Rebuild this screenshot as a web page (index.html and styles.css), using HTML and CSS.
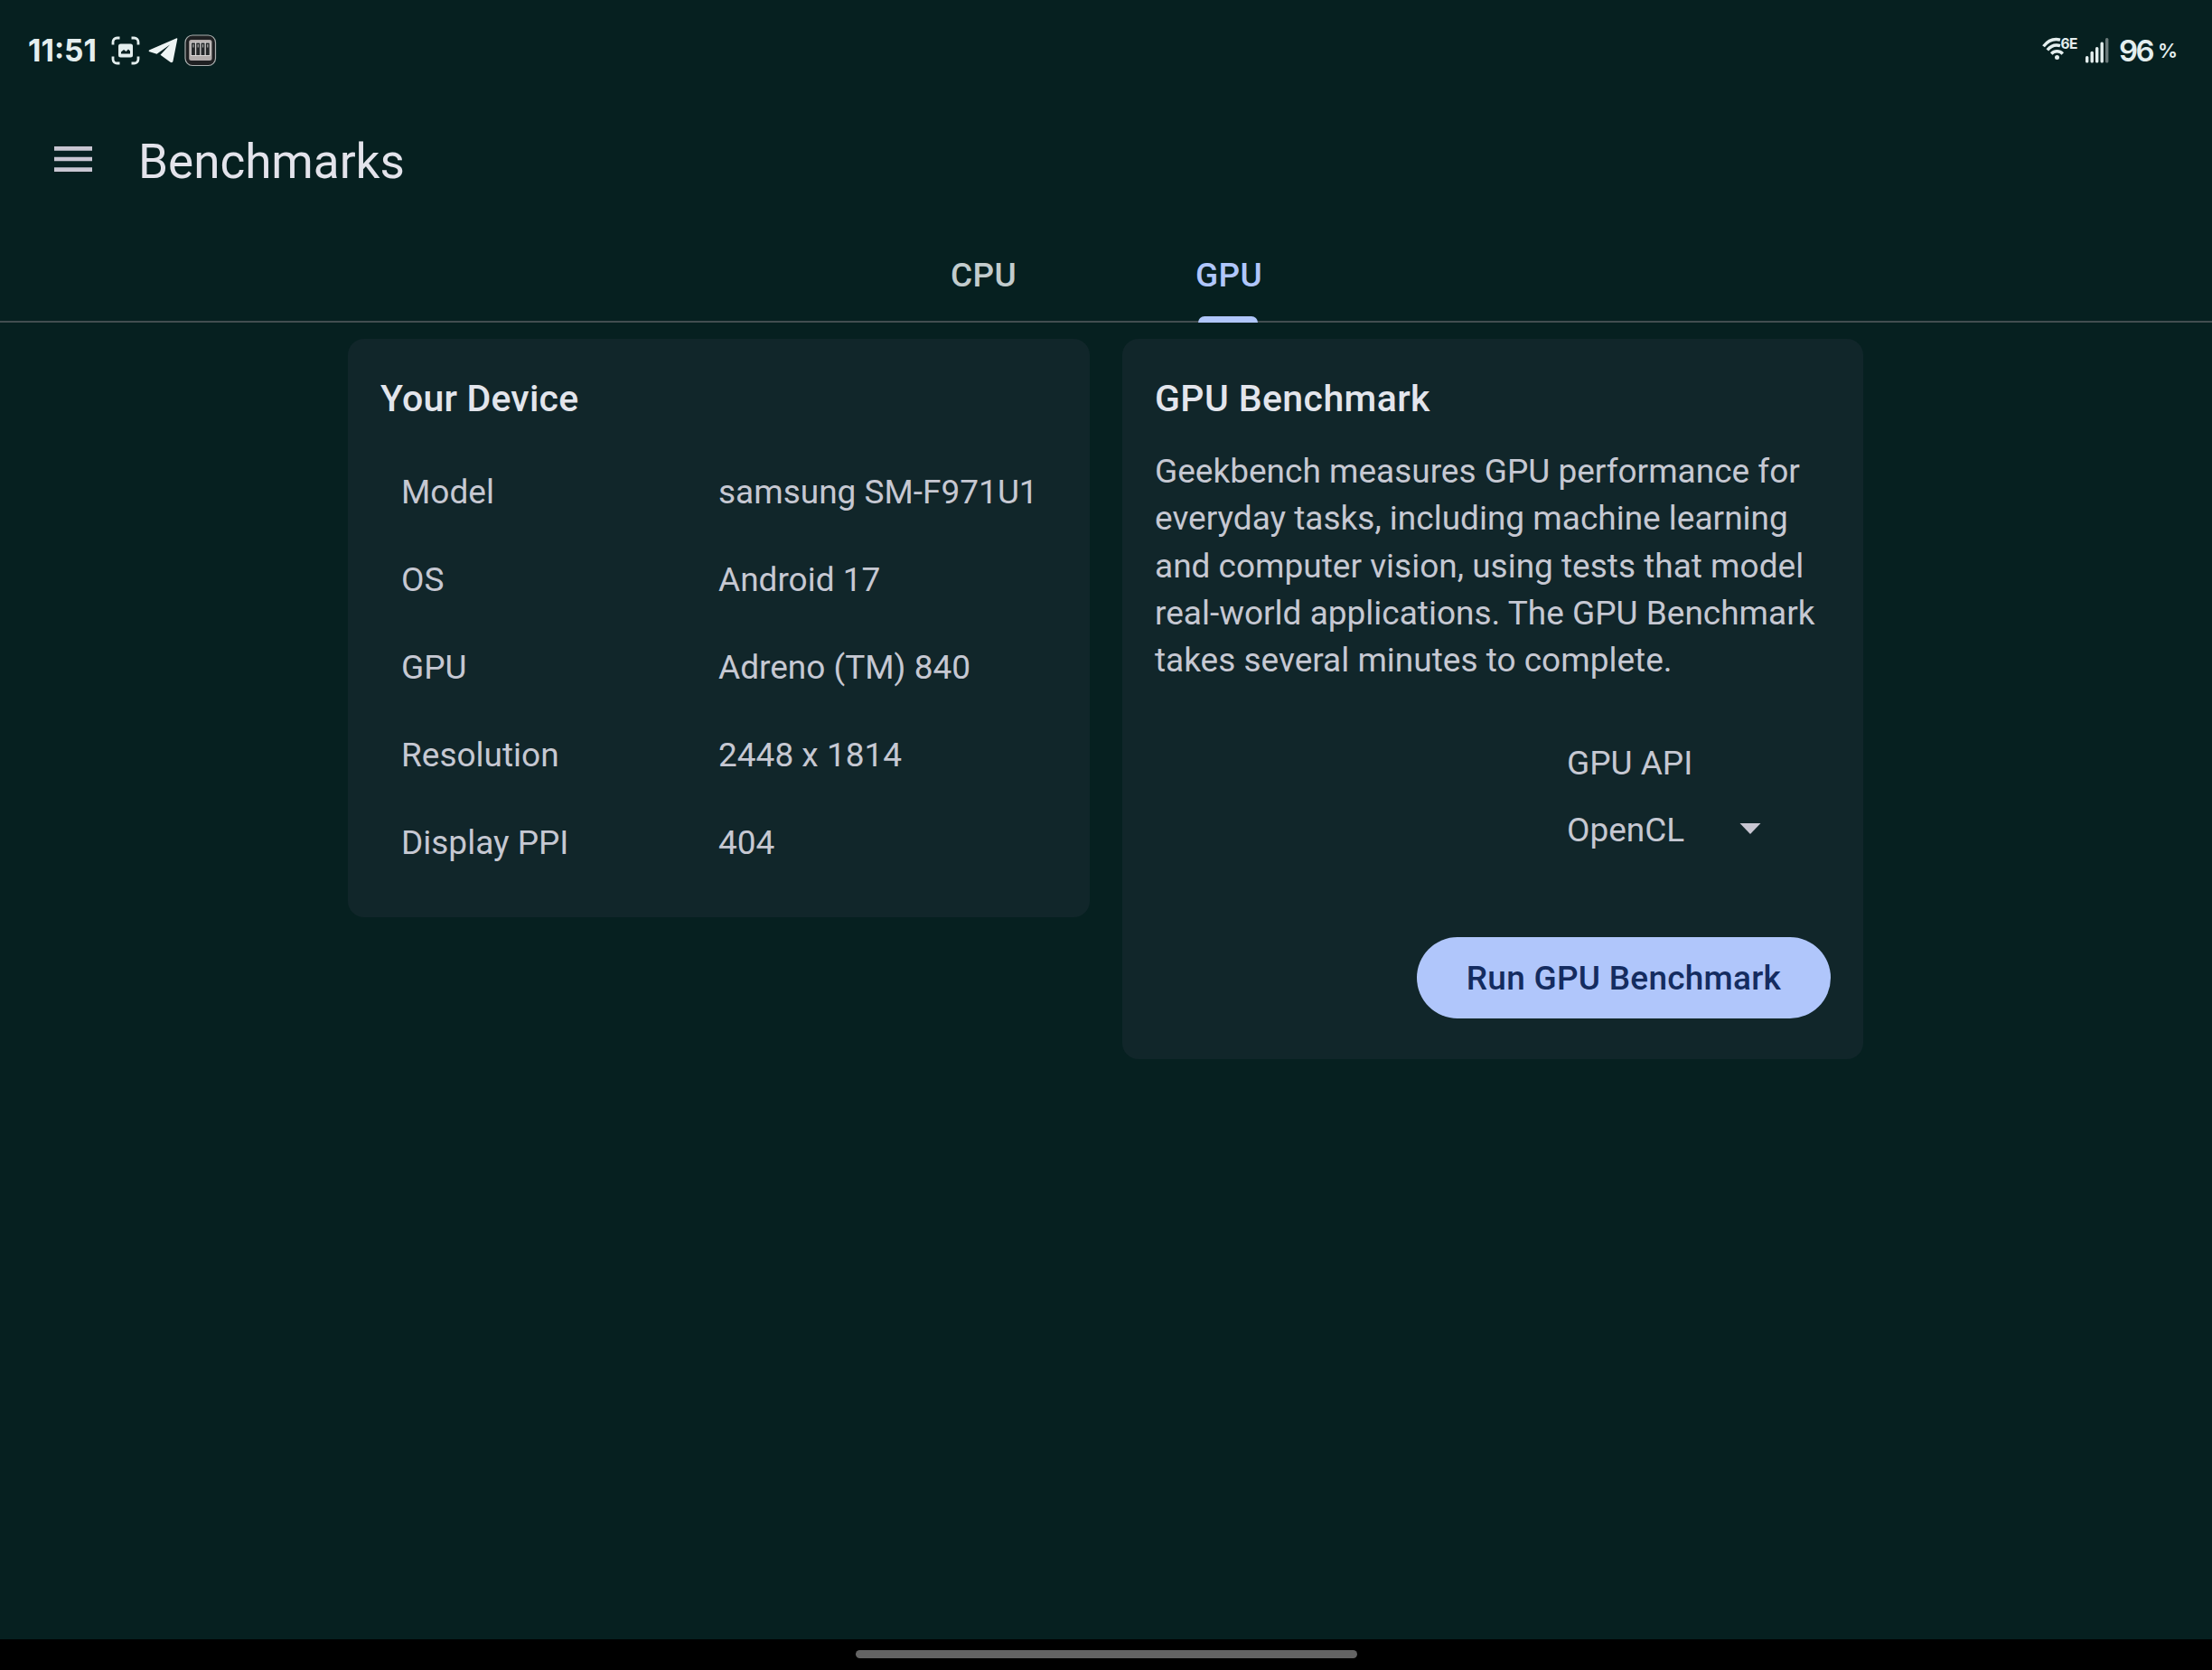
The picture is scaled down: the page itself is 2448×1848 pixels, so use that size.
FILE: index.html
```html
<!DOCTYPE html>
<html lang="en">
    <head>
        <meta charset="UTF-8">
        <meta name="viewport" content="width=device-width, initial-scale=1.0">
        <title>Benchmarks</title>
        <link rel="stylesheet" href="styles.css">
    </head>
    <body>
        <div class="status-bar">
            <div class="status-left">
                <span class="clock">11:51</span>
                <svg class="icon-capture" width="32" height="32" viewBox="0 0 32 32">
                    <path d="M2 9.500V6.500A4.500 4.500 0 0 1 6.500 2H9.500M22.500 2H25.500A4.500 4.500 0 0 1 30 6.500V9.500M30 22.500V25.500A4.500 4.500 0 0 1 25.500 30H22.500M9.500 30H6.500A4.500 4.500 0 0 1 2 25.500V22.500" fill="none" stroke="#e4eeee" stroke-width="2.800"/>
                    <rect x="8" y="8.500" width="16" height="15" rx="2.500" fill="#e4eeee"/>
                    <path d="M11 19.500V17.500L14 15L16.500 17L19 14.500L21 16.500V19.500Z" fill="#0b2122"/>
                </svg>
                <svg class="icon-telegram" width="33" height="30" viewBox="0 0 33 30">
                    <path d="M31.500 1.200L1.500 14.200C0.300 14.800 0.400 15.900 1.600 16.300L9.500 18.700L24 8.500L13.500 19.800L24.500 27.700C25.900 28.600 27.200 28.200 27.500 26.500L32.300 2.200C32.400 1.400 32.100 1 31.500 1.200Z" fill="#eef4f4"/>
                </svg>
                <svg class="icon-app" width="36" height="36" viewBox="0 0 36 36">
                    <rect x="1" y="1" width="33.500" height="33.500" rx="8" fill="#1f2022" stroke="#a9aeae" stroke-width="1.200"/>
                    <rect x="5.200" y="6" width="25.300" height="23" rx="2.500" fill="#b3adac"/>
                    <rect x="7" y="8.500" width="21.700" height="15.500" fill="#d9d6d6"/>
                    <path d="M9.900 9.500V23M15.200 9.500V23M20.500 9.500V23M25.800 9.500V23" stroke="#25282a" stroke-width="4"/>
                    <path d="M9.900 11V14.500M15.200 11V14.500M20.500 11V14.500M25.800 11V14.500" stroke="#a9a9a9" stroke-width="1.200"/>
                </svg>
            </div>
            <div class="status-right">
                <svg class="icon-wifi" width="42" height="28" viewBox="0 0 42 28">
                    <g fill="none" stroke="#e4eeee" stroke-width="3.400">
                        <path d="M1.500 9.300C6.500 3 13.500 0.500 20 2.200"/>
                        <path d="M5.800 13.300C9.700 8.800 15.300 7.200 20 8.700"/>
                        <path d="M10.200 17.500C13.700 13.900 19.300 13.900 22.800 17.500"/>
                    </g>
                    <circle cx="16.500" cy="21.600" r="2.500" fill="#e4eeee"/>
                    <text x="20.500" y="12.300" class="wifi-label">6E</text>
                </svg>
                <svg class="icon-signal" width="26" height="28" viewBox="0 0 26 28">
                    <g fill="#e4eeee">
                        <rect x="0" y="20" width="3.400" height="7.500" rx="1.500"/>
                        <rect x="5.500" y="14.800" width="3.400" height="12.700" rx="1.500"/>
                        <rect x="11" y="10" width="3.400" height="17.500" rx="1.500"/>
                        <rect x="16.500" y="4.500" width="3.400" height="23" rx="1.500"/>
                    </g>
                    <rect x="22" y="0" width="3.400" height="27.500" rx="1.500" fill="#6b7a7b"/>
                </svg>
                <span class="battery">96</span>
                <span class="percent">%</span>
            </div>
        </div>

        <header class="app-bar">
            <svg class="menu-icon" width="42" height="28" viewBox="0 0 18 12">
                <path d="M0 12h18v-2H0v2zm0-5h18V5H0v2zm0-7v2h18V0H0z" fill="#c8c6d2"/>
            </svg>
            <h1>Benchmarks</h1>
        </header>

        <nav class="tabs">
            <div class="tab">CPU</div>
            <div class="tab active">GPU</div>
        </nav>

        <main class="cards">
            <section class="card device-card">
                <h2>Your Device</h2>
                <dl class="device-info">
                    <div class="row"><dt>Model</dt><dd>samsung SM-F971U1</dd></div>
                    <div class="row"><dt>OS</dt><dd>Android 17</dd></div>
                    <div class="row"><dt>GPU</dt><dd>Adreno (TM) 840</dd></div>
                    <div class="row"><dt>Resolution</dt><dd>2448 x 1814</dd></div>
                    <div class="row"><dt>Display PPI</dt><dd>404</dd></div>
                </dl>
            </section>
            <section class="card benchmark-card">
                <h2>GPU Benchmark</h2>
                <p>Geekbench measures GPU performance for everyday tasks, including machine learning and computer vision, using tests that model real-world applications. The GPU Benchmark takes several minutes to complete.</p>
                <div class="api">
                    <div class="api-label">GPU API</div>
                    <div class="api-select">
                        <span>OpenCL</span>
                        <svg width="24" height="12" viewBox="0 0 24 12">
                            <path d="M0.500 0H23.500L12 12Z" fill="#c8c6d2"/>
                        </svg>
                    </div>
                </div>
                <button class="run-button">Run GPU Benchmark</button>
            </section>
        </main>

        <footer class="nav-bar">
            <div class="gesture-handle"></div>
        </footer>
    </body>
</html>
```
FILE: styles.css
```css
* {
    box-sizing: border-box;
}
body {
    margin: 0;
    height: 1848px;
    display: flex;
    flex-direction: column;
    background-color: #062020;
    color: #c6c8d2;
    font-family: Roboto, sans-serif;
    font-size: 37px;
    overflow: hidden;
}
h1, h2, p, dl, dd {
    margin: 0;
}

/* status bar */
.status-bar {
    height: 100px;
    padding: 12px 40px 0 31px;
    display: flex;
    justify-content: space-between;
    align-items: center;
    color: #e4eeee;
    font-family: Inter, sans-serif;
}
.status-left, .status-right {
    display: flex;
    align-items: center;
}
.clock {
    width: 92px;
    font-size: 33.5px;
    font-weight: 700;
}
.icon-telegram {
    margin-left: 9px;
}
.icon-app {
    margin-left: 7px;
}
.icon-wifi {
    overflow: visible;
}
.wifi-label {
    font-size: 15.5px;
    font-weight: 700;
    letter-spacing: -0.5px;
    fill: #e4eeee;
}
.icon-signal {
    margin-left: 6px;
}
.battery {
    width: 41px;
    margin-left: 11px;
    font-size: 33px;
    font-weight: 600;
    letter-spacing: -2.5px;
}
.percent {
    width: 20px;
    margin-left: 2px;
    font-size: 22px;
    font-weight: 600;
}

/* app bar */
.app-bar {
    height: 152px;
    padding-left: 60px;
    display: flex;
    align-items: center;
}
h1 {
    margin-left: 51px;
    padding-top: 6px;
    color: #e3e3eb;
    font-size: 53px;
    font-weight: 400;
}

/* tabs */
.tabs {
    height: 105px;
    display: flex;
    justify-content: center;
    box-shadow: inset 0 -2px #424e50;
}
.tab {
    width: 271px;
    height: 105px;
    line-height: 105px;
    text-align: center;
    font-weight: 500;
    letter-spacing: 0.4px;
    color: #c2cccd;
}
.tab.active {
    position: relative;
    padding-left: 1px;
    color: #b0c6fb;
}
.tab.active::after {
    content: "";
    position: absolute;
    left: 102px;
    bottom: 0;
    width: 66px;
    height: 7px;
    border-radius: 7px 7px 0 0;
    background-color: #b0c6fb;
}

/* cards */
.cards {
    flex: 1;
    padding: 18px 0 0 385px;
    display: flex;
    align-items: flex-start;
    gap: 36px;
}
.card {
    width: 820px;
    padding: 36px;
    border-radius: 18px;
    background-color: #11262a;
    display: flex;
    flex-direction: column;
}
.device-card {
    width: 821px;
    padding-bottom: 34px;
}
.benchmark-card {
    padding-bottom: 45px;
}
h2 {
    color: #e3e5ec;
    font-size: 41px;
    font-weight: 500;
    line-height: 60px;
    letter-spacing: 0.4px;
}
.device-card h2 {
    letter-spacing: 0.2px;
}
.device-info {
    margin-top: 25px;
    padding-left: 23px;
}
.row {
    height: 97px;
    display: flex;
    align-items: center;
}
dt {
    width: 351px;
}
p {
    margin-top: 25px;
    line-height: 52.35px;
}
.api {
    width: 292px;
    margin-top: 50px;
    align-self: flex-end;
    line-height: 74px;
}
.api-select {
    display: flex;
    align-items: center;
}
.api-select span {
    width: 191px;
}
.api-select svg {
    margin-bottom: 3px;
}
.run-button {
    width: 458px;
    height: 90px;
    margin-top: 81px;
    padding: 2px 0 0;
    align-self: flex-end;
    border: none;
    border-radius: 45px;
    background-color: #b0c6fb;
    color: #142c60;
    font: 500 37px Roboto, sans-serif;
    letter-spacing: 0.25px;
}

/* navigation bar */
.nav-bar {
    height: 34px;
    padding-top: 12px;
    display: flex;
    justify-content: center;
    background-color: #000;
}
.gesture-handle {
    width: 555px;
    height: 9px;
    border-radius: 5px;
    background-color: #646464;
}
```
